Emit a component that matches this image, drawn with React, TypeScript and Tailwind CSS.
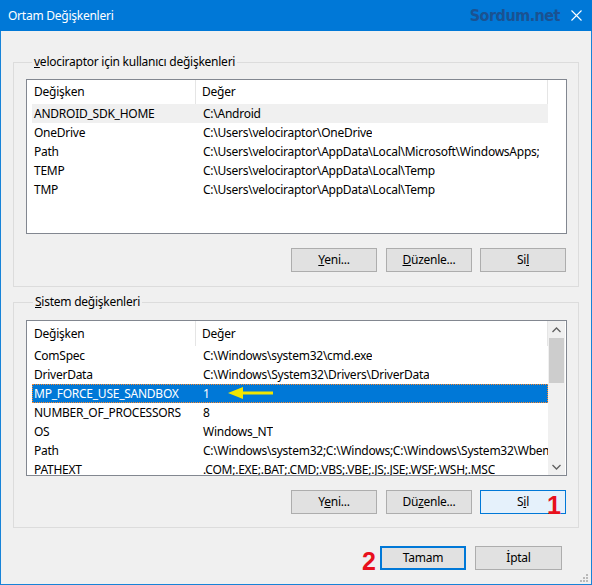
import React from "react";

type Row = { name: string; value: string };

const userRows: Row[] = [
  { name: "ANDROID_SDK_HOME", value: "C:\\Android" },
  { name: "OneDrive", value: "C:\\Users\\velociraptor\\OneDrive" },
  { name: "Path", value: "C:\\Users\\velociraptor\\AppData\\Local\\Microsoft\\WindowsApps;" },
  { name: "TEMP", value: "C:\\Users\\velociraptor\\AppData\\Local\\Temp" },
  { name: "TMP", value: "C:\\Users\\velociraptor\\AppData\\Local\\Temp" },
];

const systemRows: Row[] = [
  { name: "ComSpec", value: "C:\\Windows\\system32\\cmd.exe" },
  { name: "DriverData", value: "C:\\Windows\\System32\\Drivers\\DriverData" },
  { name: "MP_FORCE_USE_SANDBOX", value: "1" },
  { name: "NUMBER_OF_PROCESSORS", value: "8" },
  { name: "OS", value: "Windows_NT" },
  { name: "Path", value: "C:\\Windows\\system32;C:\\Windows;C:\\Windows\\System32\\Wbem;C:\\Windows" },
  { name: "PATHEXT", value: ".COM;.EXE;.BAT;.CMD;.VBS;.VBE;.JS;.JSE;.WSF;.WSH;.MSC" },
];

const Chevron: React.FC<{ down?: boolean }> = ({ down }) => (
  <svg width="9" height="6" viewBox="0 0 9 6" className={down ? "rotate-180" : ""}>
    <path d="M0.5 5 L4.5 1 L8.5 5" fill="none" stroke="#606060" strokeWidth="1.3" />
  </svg>
);

const Arrow: React.FC = () => (
  <svg width="48" height="14" viewBox="0 0 48 14" className="absolute left-[195px] top-[2px]">
    <polygon points="1,7 16,1 16,13" fill="#f2e500" />
    <rect x="14" y="5.5" width="32" height="3" fill="#f2e500" />
  </svg>
);

interface ListViewProps {
  rows: Row[];
  height: string;
  headerH: string;
  hoverIndex?: number;
  selectedIndex?: number;
  scroll?: boolean;
}

const ListView: React.FC<ListViewProps> = ({ rows, height, headerH, hoverIndex, selectedIndex, scroll }) => (
  <div className={`flex ${height} border border-[#828790] bg-white overflow-hidden`}>
    <div className="w-[521px] shrink-0 flex flex-col">
      <div className={`flex ${headerH} shrink-0 items-center`}>
        <div className="w-[169px] h-full flex items-center pl-[7px] border-r border-[#e5e5e5]">Değişken</div>
        <div className="w-[352px] h-full flex items-center pl-[6px] border-r border-[#e5e5e5]">Değer</div>
      </div>
      {rows.map((r, i) => {
        const sel = i === selectedIndex;
        const hov = i === hoverIndex;
        return (
          <div
            key={r.name}
            className={`relative ml-[5px] w-[516px] h-[19px] shrink-0 flex items-center whitespace-nowrap ${
              sel
                ? "bg-[#0078d7] text-white outline-1 outline-dotted outline-[#ff8728] -outline-offset-1"
                : hov
                ? "bg-[#f0f0f0]"
                : ""
            }`}
          >
            <div className="w-[164px] pl-[2px] shrink-0">{r.name}</div>
            <div className="pl-[7px] overflow-hidden">{r.value}</div>
            {sel && <Arrow />}
          </div>
        );
      })}
    </div>
    {scroll ? (
      <div className="w-[17px] shrink-0 bg-[#f0f0f0] flex flex-col">
        <div className="h-[17px] shrink-0 flex items-center justify-center">
          <Chevron />
        </div>
        <div className="h-[45px] shrink-0 mx-[1px] bg-[#cdcdcd]" />
        <div className="flex-1" />
        <div className="h-[17px] shrink-0 flex items-center justify-center">
          <Chevron down />
        </div>
      </div>
    ) : (
      <div className="flex-1" />
    )}
  </div>
);

const Btn: React.FC<{ children: React.ReactNode; className?: string; hot?: boolean; def?: boolean }> = ({
  children,
  className = "",
  hot,
  def,
}) => (
  <div
    className={`relative w-[86px] h-[24px] flex items-center justify-center ${
      hot
        ? "bg-[#e5f1fb] border border-[#0078d7]"
        : def
        ? "bg-[#e1e1e1] border-2 border-[#0078d7]"
        : "bg-[#e1e1e1] border border-[#adadad]"
    } ${className}`}
  >
    {children}
  </div>
);

const Mark: React.FC<{ n: string; className: string }> = ({ n, className }) => (
  <span
    className={`absolute text-[25px] leading-none font-bold text-[#e8101c] tracking-normal ${className}`}
    style={{ fontFamily: '"Liberation Sans", Arial, sans-serif' }}
  >
    {n}
  </span>
);

export default function App() {
  return (
    <div
      className="relative w-[592px] h-[585px] border border-[#1783d8] bg-[#f0f0f0] text-[12px] tracking-[-0.25px] text-black flex flex-col"
      style={{ fontFamily: '"Noto Sans", "Segoe UI", sans-serif' }}
    >
      <div className="-mx-[1px] -mt-[1px] h-[31px] shrink-0 bg-[#0078d7] flex items-center pl-[8px] pr-[10px] text-white">
        <span className="text-[12px] pt-[1px]">Ortam Değişkenleri</span>
        <span
          className="ml-auto mr-[11px] text-[16px] font-bold text-[#1a5292] tracking-[-0.5px]"
          style={{ fontFamily: '"DejaVu Sans Condensed", "Liberation Sans", sans-serif' }}
        >
          Sordum.net
        </span>
        <svg width="11" height="11" viewBox="0 0 11 11">
          <path d="M0.5 0.5 L10.5 10.5 M10.5 0.5 L0.5 10.5" stroke="white" strokeWidth="1.1" />
        </svg>
      </div>

      <div className="flex flex-col px-[12px]">
        <fieldset className="mt-[23px] border border-[#dcdcdc] pl-[12px] pr-[11px] pt-[9px] pb-[14px]">
          <legend className="ml-[6px] px-[2px] leading-[16px]">
            <u>v</u>elociraptor için kullanıcı değişkenleri
          </legend>
          <ListView rows={userRows} height="h-[155px]" headerH="h-[24px]" hoverIndex={0} />
          <div className="flex justify-end mt-[14px] pr-[1px]">
            <Btn>
              <span>
                <u>Y</u>eni...
              </span>
            </Btn>
            <Btn className="ml-[9px]">
              <span>
                <u>D</u>üzenle...
              </span>
            </Btn>
            <Btn className="ml-[8px]">
              <span>
                Si<u>l</u>
              </span>
            </Btn>
          </div>
        </fieldset>

        <fieldset className="mt-[7px] border border-[#dcdcdc] pl-[12px] pr-[11px] pt-[10px] pb-[13px]">
          <legend className="ml-[7px] px-[2px] leading-[16px]">
            <u>S</u>istem değişkenleri
          </legend>
          <ListView rows={systemRows} height="h-[156px]" headerH="h-[25px]" selectedIndex={2} scroll />
          <div className="flex justify-end mt-[14px] pr-[1px]">
            <Btn>
              <span>
                Y<u>e</u>ni...
              </span>
            </Btn>
            <Btn className="ml-[9px]">
              <span>
                Dü<u>z</u>enle...
              </span>
            </Btn>
            <Btn className="ml-[8px]" hot>
              <span>
                S<u>i</u>l
              </span>
              <Mark n="1" className="left-[66px] top-[2px]" />
            </Btn>
          </div>
        </fieldset>

        <div className="flex justify-end mt-[18px] pr-[17px]">
          <Btn def>
            <span>Tamam</span>
            <Mark n="2" className="-left-[20px] top-[1px]" />
          </Btn>
          <Btn className="ml-[9px] w-[87px]">
            <span>İptal</span>
          </Btn>
        </div>
      </div>

      <svg width="12" height="12" viewBox="0 0 12 12" className="absolute right-[2px] bottom-[1px]">
        {[
          [9, 1],
          [6, 4],
          [9, 4],
          [3, 7],
          [6, 7],
          [9, 7],
        ].map(([x, y]) => (
          <rect key={`${x}-${y}`} x={x} y={y + 2} width="2" height="2" fill="#b9b9b9" />
        ))}
      </svg>
    </div>
  );
}
